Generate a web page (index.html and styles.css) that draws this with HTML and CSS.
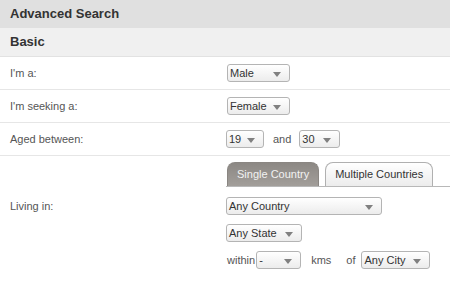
FILE: index.html
```html
<!DOCTYPE html>
<html lang="en">
<head>
  <meta charset="UTF-8">
  <title>Advanced Search</title>
  <link rel="stylesheet" href="styles.css">
</head>
<body>
  <div class="panel">
    <div class="title">Advanced Search</div>
    <div class="section">Basic</div>

    <div class="row">
      <div class="label">I'm a:</div>
      <div class="field">
        <div class="select w-sex">Male<span class="arrow"></span></div>
      </div>
    </div>

    <div class="row">
      <div class="label">I'm seeking a:</div>
      <div class="field">
        <div class="select w-sex">Female<span class="arrow"></span></div>
      </div>
    </div>

    <div class="row">
      <div class="label">Aged between:</div>
      <div class="field inline">
        <div class="select w-age">19<span class="arrow"></span></div>
        <span class="word">and</span>
        <div class="select w-age2">30<span class="arrow"></span></div>
      </div>
    </div>

    <div class="row living">
      <div class="label">Living in:</div>
      <div class="field">
        <div class="tabs">
          <div class="tab active">Single Country</div>
          <div class="tab">Multiple Countries</div>
        </div>
        <div class="stack">
          <div class="select w-country">Any Country<span class="arrow"></span></div>
          <div class="select w-state">Any State<span class="arrow"></span></div>
          <div class="inline">
            <span class="word first">within</span>
            <div class="select w-dist">-<span class="arrow"></span></div>
            <span class="word kms">kms</span>
            <span class="word of">of</span>
            <div class="select w-city">Any City<span class="arrow"></span></div>
          </div>
        </div>
      </div>
    </div>
  </div>
</body>
</html>
```

FILE: styles.css
```css
* {
  box-sizing: border-box;
}

body {
  margin: 0;
  font-family: "Liberation Sans", Arial, sans-serif;
  font-size: 11px;
  color: #555;
  background: #fff;
}

.panel {
  width: 450px;
}

.title {
  height: 28px;
  line-height: 28px;
  padding-left: 10px;
  background: #e0e0e0;
  font-size: 13px;
  font-weight: bold;
  color: #333;
}

.section {
  height: 29px;
  line-height: 28px;
  padding-left: 10px;
  background: #f0f0f0;
  border-bottom: 1px solid #e2e2e2;
  font-size: 13px;
  font-weight: bold;
  color: #333;
}

.row {
  display: flex;
  align-items: center;
  padding: 7px 0;
  border-bottom: 1px solid #e6e6e6;
}

.label {
  width: 226px;
  padding-left: 10px;
  line-height: 14px;
}

.field {
  flex: 1;
}

.inline {
  display: flex;
  align-items: center;
}

.select {
  position: relative;
  height: 18px;
  line-height: 16px;
  padding-left: 2px;
  border: 1px solid #b4b4b4;
  border-radius: 3px;
  background: linear-gradient(#ffffff, #ececec);
  color: #333;
  white-space: nowrap;
}

.arrow {
  position: absolute;
  right: 8px;
  top: 7px;
  width: 0;
  height: 0;
  border-left: 4px solid transparent;
  border-right: 4px solid transparent;
  border-top: 5px solid #808080;
}

.w-sex { width: 63px; margin-left: 1px; }
.w-age { width: 38px; }
.w-age2 { width: 41px; }
.w-country { width: 156px; }
.w-state { width: 76px; }
.w-dist { width: 45px; }
.w-city { width: 69px; }

.word {
  margin: 0 8px 0 9px;
}

.word.first {
  margin: 0 1px 0 1px;
}

.word.kms {
  margin: 0 15px 0 10px;
}

.word.of {
  margin: 0 6px 0 0;
}

.living {
  align-items: flex-start;
  padding: 6px 0 14px;
  border-bottom: none;
}

.living .label {
  padding-top: 37px;
}

.tabs {
  display: flex;
  align-items: flex-end;
  gap: 6px;
  height: 25px;
  padding-left: 1px;
  border-bottom: 1px solid #b8b8b8;
}

.tab {
  height: 24px;
  line-height: 23px;
  padding: 0 9px;
  border: 1px solid #b0b0b0;
  border-bottom: none;
  border-radius: 8px 8px 0 0;
  background: linear-gradient(#ffffff, #ececec);
  color: #333;
  white-space: nowrap;
}

.tab.active {
  border-color: #8a8682;
  background: linear-gradient(#8c8884, #a29e9a);
  color: #f2f2f2;
}

.stack {
  display: flex;
  flex-direction: column;
  gap: 9px;
  padding-top: 10px;
}

.stack .inline .select {
  flex: none;
}
```
